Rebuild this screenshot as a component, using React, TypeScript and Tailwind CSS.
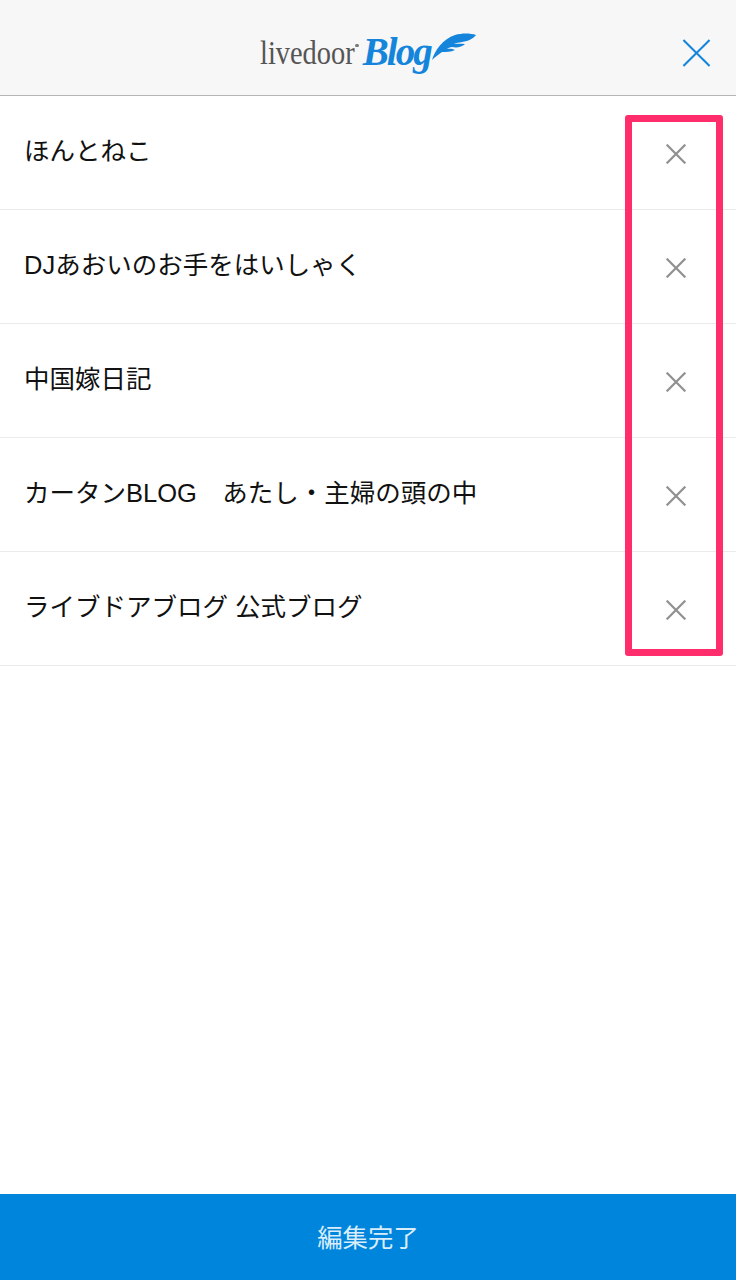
import React from "react";

const blogs = [
  "ほんとねこ",
  "DJあおいのお手をはいしゃく",
  "中国嫁日記",
  "カータンBLOG　あたし・主婦の頭の中",
  "ライブドアブログ 公式ブログ",
];

const Cross = ({ className, sw }: { className: string; sw: number }) => (
  <svg viewBox="0 0 30 30" className={className} fill="none" stroke="currentColor" strokeWidth={sw}>
    <path d="M1 1 L29 29 M29 1 L1 29" />
  </svg>
);

const Logo = () => (
  <div className="flex items-start h-[40px] w-[216px] mt-[12px]">
    <span className="block w-[96px] mt-[2px] text-[33px] leading-[34px] text-[#555555] [font-family:'Liberation_Serif',serif] scale-x-[0.86] origin-left whitespace-nowrap">
      livedoor
    </span>
    <span className="block w-[4px] h-[3px] mt-[10px] -ml-[1px] rounded-full bg-[#777777]" />
    <span className="block w-[72px] ml-[4px] -mt-[3px] text-[39px] leading-[42px] font-bold italic text-[#1585dc] [font-family:'Liberation_Serif',serif] tracking-[-2px] whitespace-nowrap">
      Blog
    </span>
    <svg viewBox="0 0 44 28" className="w-[44px] h-[28px] shrink-0 -mt-[1px]" fill="#1585dc">
      <path d="M0 27 C3 17 11 6 23 2 C30 0 38 0 44 2 C42 5 37 8 30 9 C27 9.5 24 10 22 11 C26 10.5 30 10.5 33 11 C30 14 25 15 20 14 C18 14 16 15 15 16 C18 15.5 21 16 23 17 C19 19 14 19 10 19 C7 21 3 24 0 27 Z" />
    </svg>
  </div>
);

export default function App() {
  return (
    <div className="relative w-[736px] h-[1280px] flex flex-col bg-white text-[#111111] [font-family:'Liberation_Sans','Noto_Sans_CJK_JP',sans-serif]">
      <header className="h-[96px] shrink-0 flex items-center justify-center relative bg-[#f7f7f7] border-b border-[#b5b5b5]">
        <Logo />
        <button className="absolute left-[682px] top-[39px] text-[#1585dc]">
          <Cross className="w-[29px] h-[28px] block" sw={2.2} />
        </button>
      </header>

      <ul className="flex-1">
        {blogs.map((name) => (
          <li key={name} className="h-[114px] flex justify-between border-b border-[#ebebeb]">
            <span className="pl-[24px] pt-[38px] text-[25.5px] leading-[34px] whitespace-pre">{name}</span>
            <button className="w-[120px] flex justify-center pt-[48px] pr-[1px] text-[#919191]">
              <Cross className="w-[20px] h-[20px] block" sw={3.4} />
            </button>
          </li>
        ))}
      </ul>

      <button className="h-[86px] shrink-0 bg-[#0085dc] text-[#d9edfa] text-[25.4px] pt-[2px]">編集完了</button>

      {/* annotation frame over the list */}
      <div className="absolute left-[625px] top-[115px] w-[98px] h-[541px] border-[7px] border-[#ff2d6b] rounded-[3px]" />
    </div>
  );
}
